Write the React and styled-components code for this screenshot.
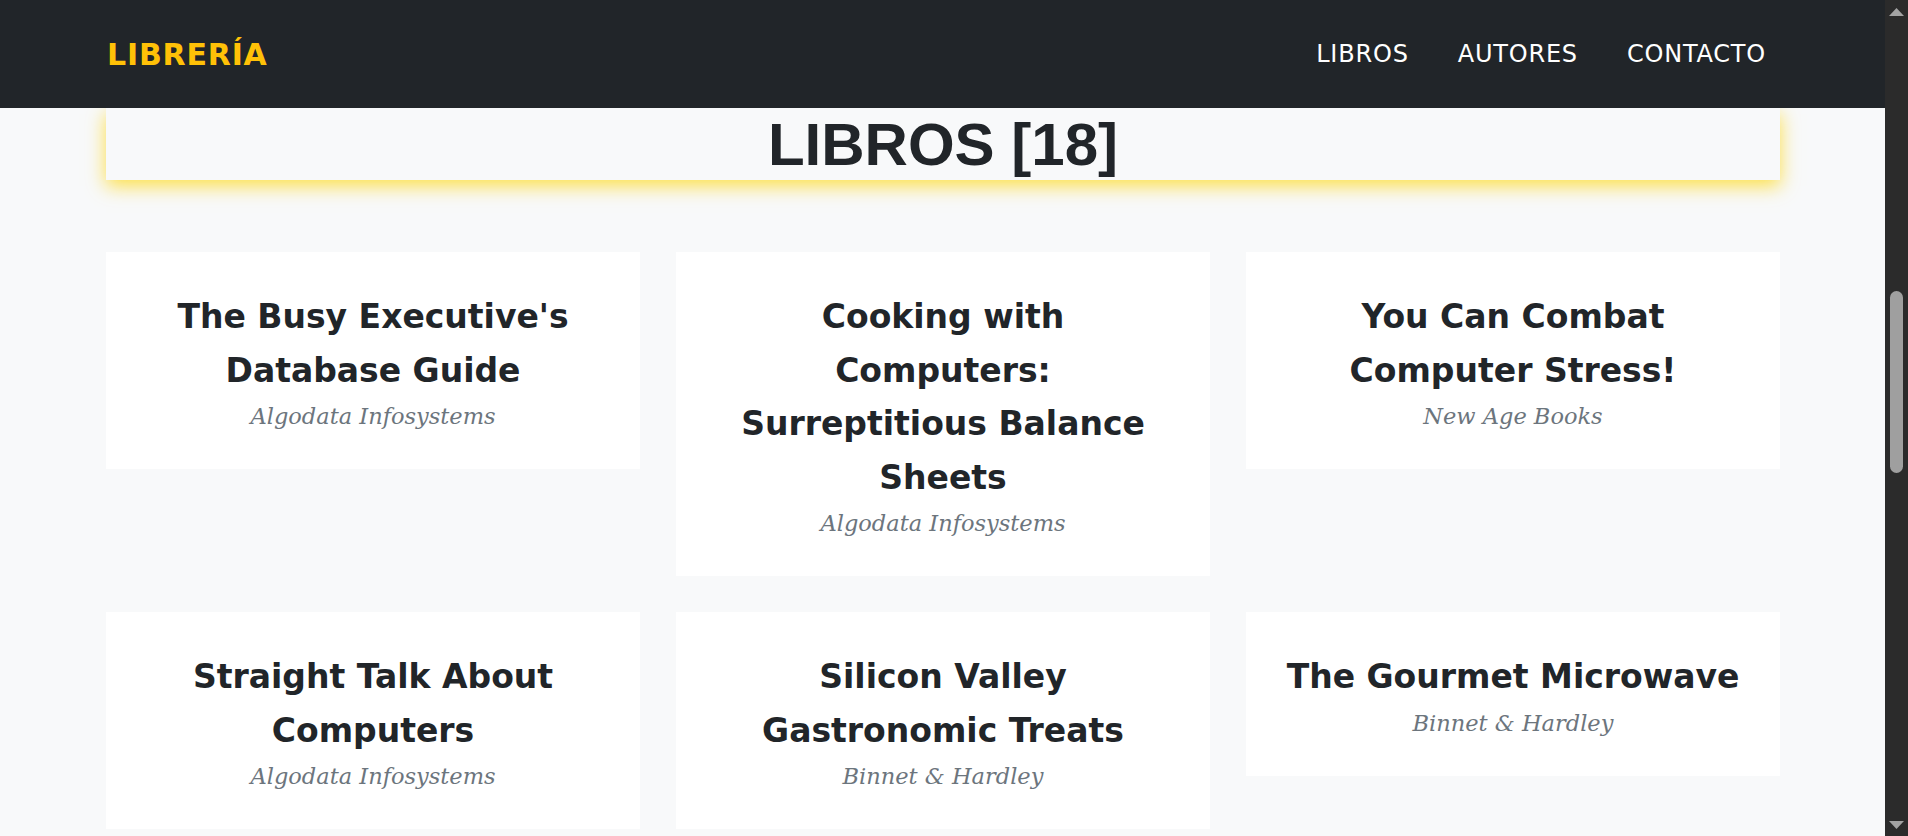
import React from 'react'
import styled, { createGlobalStyle } from 'styled-components'

const GlobalStyle = createGlobalStyle`
  html, body {
    margin: 0;
    height: 100%;
    overflow: hidden;
  }
  body {
    background: #f8f9fa;
    font-family: "DejaVu Sans", sans-serif;
  }
  #root {
    height: 100%;
  }
`

const TOTAL_BOOKS = 18

// only the books that fit in the window at this scroll position
const books = [
  { title: "The Busy Executive's Database Guide", publisher: 'Algodata Infosystems' },
  { title: 'Cooking with Computers: Surreptitious Balance Sheets', publisher: 'Algodata Infosystems' },
  { title: 'You Can Combat Computer Stress!', publisher: 'New Age Books' },
  { title: 'Straight Talk About Computers', publisher: 'Algodata Infosystems' },
  { title: 'Silicon Valley Gastronomic Treats', publisher: 'Binnet & Hardley' },
  { title: 'The Gourmet Microwave', publisher: 'Binnet & Hardley' }
]

const Shell = styled.div`
  display: flex;
  height: 100vh;
`

const Viewport = styled.div`
  flex: 1;
  min-width: 0;
  display: flex;
  flex-direction: column;
  overflow: hidden;
`

const Navbar = styled.nav`
  flex-shrink: 0;
  height: 108px;
  background: #212529;
  display: flex;
  align-items: center;
  justify-content: space-between;
  padding: 0 119px 0 107px;
`

const Brand = styled.a`
  color: #ffc107;
  font-family: "DejaVu Sans", sans-serif;
  font-weight: 700;
  font-size: 30px;
  letter-spacing: 0.8px;
  text-decoration: none;
`

const NavLinks = styled.div`
  display: flex;
  gap: 49px;
`

const NavLink = styled.a`
  color: #fff;
  font-family: "DejaVu Sans", sans-serif;
  font-size: 24px;
  letter-spacing: 0.8px;
  text-decoration: none;
`

const Main = styled.main`
  flex: 1;
  overflow: hidden;
`

const Page = styled.div`
  padding: 0 105px 40px 106px;
`

// the page is scrolled a little: only the lower part of the header shows under the navbar
const HeaderBox = styled.header`
  background: #f8f9fa;
  box-shadow: 0 6px 18px rgba(255, 214, 0, 0.72);
  padding: 3px 0 1px;
  text-align: center;
`

const Title = styled.h1`
  margin: 0;
  color: #212529;
  font-family: "Liberation Sans", Arial, sans-serif;
  font-weight: 700;
  font-size: 60px;
  line-height: 68px;
`

const Grid = styled.section`
  margin-top: 72px;
  display: grid;
  grid-template-columns: repeat(3, 1fr);
  gap: 36px;
  align-items: start;
`

const Card = styled.article`
  background: #fff;
  padding: 38px 38px 36px;
  text-align: center;
`

const BookTitle = styled.h2`
  margin: 0;
  color: #212529;
  font-family: "DejaVu Sans", sans-serif;
  font-weight: 700;
  font-size: 33px;
  line-height: 53.5px;
`

const Publisher = styled.p`
  margin: 3px 0 0;
  color: #6c757d;
  font-family: "DejaVu Serif", serif;
  font-style: italic;
  font-size: 22.5px;
  line-height: 33px;
`

const Scrollbar = styled.div`
  width: 23px;
  flex-shrink: 0;
  background: #2b2b2b;
  display: flex;
  flex-direction: column;
  align-items: center;
`

const ScrollButton = styled.div`
  height: 23px;
  width: 100%;
  display: flex;
  align-items: center;
  justify-content: center;
`

const Track = styled.div`
  flex: 1;
  display: flex;
  flex-direction: column;
  align-items: center;
`

const Thumb = styled.div`
  margin-top: ${p => p.offset}px;
  width: 13px;
  height: ${p => p.size}px;
  border-radius: 7px;
  background: #9f9f9f;
`

const Arrow = ({ down }) => (
  <svg width="15" height="8" viewBox="0 0 15 8">
    <polygon points={down ? '0,0 15,0 7.5,8' : '0,8 15,8 7.5,0'} fill="#a3a3a3" />
  </svg>
)

const BookCard = ({ title, publisher }) => (
  <Card>
    <BookTitle>{title}</BookTitle>
    <Publisher>{publisher}</Publisher>
  </Card>
)

export default function App() {
  return (
    <>
      <GlobalStyle />
      <Shell>
        <Viewport>
          <Navbar>
            <Brand href="#">LIBRERÍA</Brand>
            <NavLinks>
              <NavLink href="#">LIBROS</NavLink>
              <NavLink href="#">AUTORES</NavLink>
              <NavLink href="#">CONTACTO</NavLink>
            </NavLinks>
          </Navbar>
          <Main>
            <Page>
              <HeaderBox>
                <Title>LIBROS [{TOTAL_BOOKS}]</Title>
              </HeaderBox>
              <Grid>
                {books.map(b => (
                  <BookCard key={b.title} title={b.title} publisher={b.publisher} />
                ))}
              </Grid>
            </Page>
          </Main>
        </Viewport>
        <Scrollbar>
          <ScrollButton>
            <Arrow />
          </ScrollButton>
          <Track>
            <Thumb offset={268} size={182} />
          </Track>
          <ScrollButton>
            <Arrow down />
          </ScrollButton>
        </Scrollbar>
      </Shell>
    </>
  )
}
